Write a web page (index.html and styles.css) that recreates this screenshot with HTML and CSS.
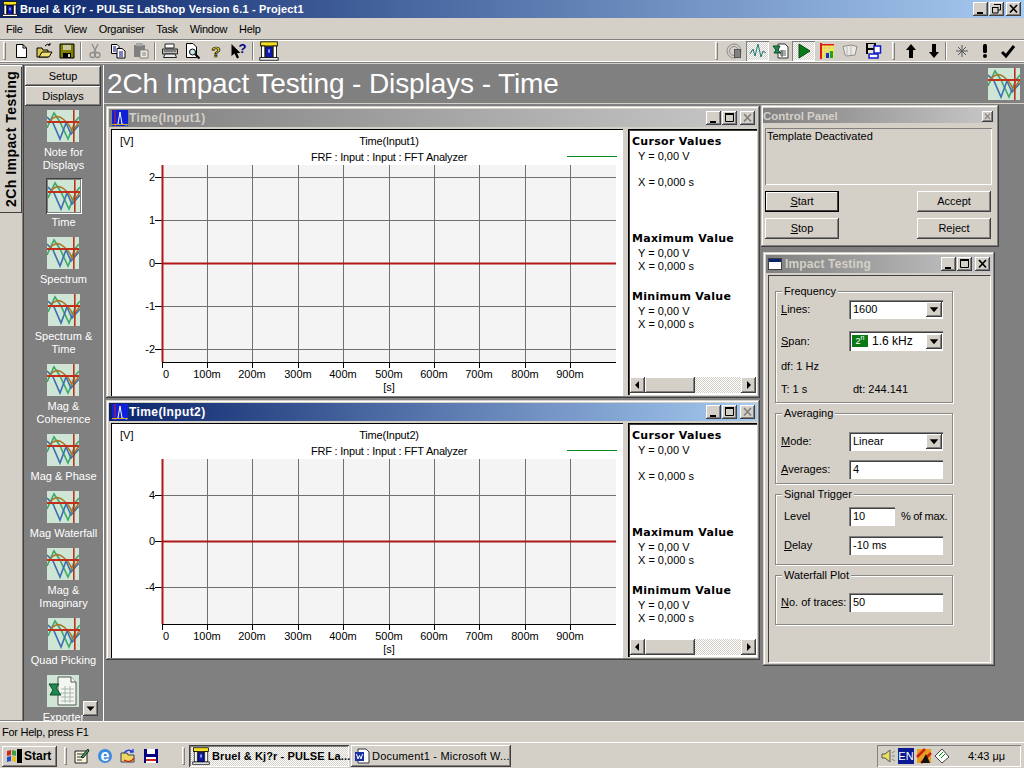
FILE: index.html
```html
<!DOCTYPE html>
<html lang="en">
<head>
<meta charset="utf-8">
<title>PULSE LabShop</title>
<link rel="stylesheet" href="styles.css">
</head>
<body>
<svg class="defs" width="0" height="0" aria-hidden="true">
  <defs>
    <symbol id="chart" viewBox="0 0 32 32">
      <rect width="32" height="32" fill="#cfe6d6"/>
      <path d="M0 18L7 3L13 12L21 29L28 12L32 7" fill="none" stroke="#3da86a" stroke-width="1.6"/>
      <path d="M0 7L6 13L13 29L19 13L24 24L32 15" fill="none" stroke="#3a6fb0" stroke-width="1.6"/>
      <path d="M2 12Q9 3 16 9T24 19T32 12" fill="none" stroke="#a8762a" stroke-width="1.6"/>
      <rect y="11" width="32" height="2" fill="#c2301c"/>
      <rect x="26" width="1.6" height="32" fill="#c2301c"/>
    </symbol>
    <symbol id="winicon" viewBox="0 0 16 16">
      <rect width="16" height="16" fill="#1020d8"/>
      <path d="M3 15L6 14L8 2L10 14L15 15" fill="none" stroke="#fff" stroke-width="1"/>
      <path d="M3 0V16" stroke="#d02020"/>
      <path d="M0 14.5H16" stroke="#c8b020"/>
    </symbol>
    <symbol id="excel" viewBox="0 0 32 32">
      <rect width="32" height="32" fill="#cfe6d6"/>
      <path d="M11 2H24L29 7V30H11Z" fill="#f4f6f2" stroke="#555"/>
      <path d="M24 2V7H29" fill="#fff" stroke="#555"/>
      <path d="M14 14H27M14 18H27M14 22H27M14 26H27M18 11V28M23 11V28" stroke="#a8b8a8"/>
      <path d="M2 9H12L9 13L14 20H3L6 15Z" fill="#1f8a50" stroke="#0c4a28"/>
    </symbol>
    <symbol id="temple" viewBox="0 0 24 24">
      <rect x="2" y="1" width="20" height="5" fill="#f4e020" stroke="#000"/>
      <rect x="3" y="6" width="4" height="14" fill="#fff" stroke="#000"/>
      <rect x="17" y="6" width="4" height="14" fill="#fff" stroke="#000"/>
      <rect x="8" y="7" width="8" height="13" fill="#1018b0" stroke="#000"/>
      <rect x="11" y="10" width="2" height="4" fill="#9cc4f0"/>
      <rect x="1" y="20" width="22" height="3" fill="#fff" stroke="#000"/>
    </symbol>
    <symbol id="floppy" viewBox="0 0 16 16">
      <path d="M1 1H15V15H1Z" fill="#808000" stroke="#000"/>
      <rect x="4" y="2" width="8" height="5" fill="#c8c8a0"/>
      <rect x="4" y="10" width="8" height="5" fill="#000"/>
      <rect x="9" y="11" width="2" height="3" fill="#d4d0c8"/>
    </symbol>
    <symbol id="word" viewBox="0 0 16 16">
      <path d="M4 1H12L15 4V15H4Z" fill="#fff" stroke="#334"/>
      <rect x="1" y="4" width="9" height="9" fill="#1830a0"/>
      <path d="M2.500 6L4 11L5.500 7.500L7 11L8.500 6" fill="none" stroke="#fff"/>
    </symbol>
    <symbol id="min" viewBox="0 0 15 14"><rect x="4" y="10" width="6" height="2" fill="#000"/></symbol>
    <symbol id="max" viewBox="0 0 15 14"><path d="M3.500 3.500H11.500V10.500H3.500Z M3 2.500H12" fill="none" stroke="#000"/><rect x="3" y="2" width="9" height="2" fill="#000"/></symbol>
    <symbol id="restore" viewBox="0 0 15 14"><path d="M5.500 2.500H11.500V8H9M3.500 5.500H9V11H3.500Z" fill="none" stroke="#000"/><path d="M5 2.500H12M3 5.500H9.500" stroke="#000"/></symbol>
    <symbol id="close" viewBox="0 0 15 14"><path d="M4 3L11 10.500M11 3L4 10.500" stroke="#000" stroke-width="1.700"/></symbol>
    <symbol id="closegrey" viewBox="0 0 15 14"><path d="M4 3L11 10.500M11 3L4 10.500" stroke="#808080" stroke-width="1.700"/></symbol>
    <symbol id="darrow" viewBox="0 0 15 14"><path d="M3.500 5H11.500L7.500 9.500Z" fill="#000"/></symbol>
    <symbol id="larrow" viewBox="0 0 15 15"><path d="M9 3.500V11.500L5 7.500Z" fill="#000"/></symbol>
    <symbol id="rarrow" viewBox="0 0 15 15"><path d="M6 3.500V11.500L10 7.500Z" fill="#000"/></symbol>
  </defs>
</svg>

<div class="app">
  <header class="titlebar">
    <svg class="title-icon" viewBox="0 0 24 24"><use href="#temple"/></svg>
    <span class="title-text">Bruel &amp; Kj?r - PULSE LabShop Version 6.1 - Project1</span>
    <span class="caption app-caption">
      <button class="cbtn"><svg><use href="#min"/></svg></button>
      <button class="cbtn"><svg><use href="#restore"/></svg></button>
      <button class="cbtn cbtn-last"><svg><use href="#close"/></svg></button>
    </span>
  </header>

  <nav class="menubar">
    <span>File</span><span>Edit</span><span>View</span><span>Organiser</span><span>Task</span><span>Window</span><span>Help</span>
  </nav>

  <div class="toolbar">
    <i class="grip grip-first"></i>
    <span class="tool"><svg viewBox="0 0 16 16"><path d="M3.500 1.500H10L13.500 5V14.500H3.500Z" fill="#fff" stroke="#000"/><path d="M10 1.500V5H13.500" fill="none" stroke="#000"/></svg></span>
    <span class="tool"><svg viewBox="0 0 16 16"><path d="M1 14V5H6L7 7H12V14Z" fill="#d8c850" stroke="#000"/><path d="M3 14L6 9H16L13 14Z" fill="#f0e070" stroke="#000"/><path d="M9 3Q11 0 14 2M14 2V0M14 2H12" fill="none" stroke="#000"/></svg></span>
    <span class="tool"><svg><use href="#floppy"/></svg></span>
    <i class="sep sep-a"></i>
    <span class="tool"><svg viewBox="0 0 16 16"><path d="M5 1L9 9M11 1L7 9" stroke="#8c8c8c" stroke-width="1.300"/><circle cx="5.500" cy="12" r="2.500" fill="none" stroke="#8c8c8c" stroke-width="1.300"/><circle cx="10.500" cy="12" r="2.500" fill="none" stroke="#8c8c8c" stroke-width="1.300"/></svg></span>
    <span class="tool"><svg viewBox="0 0 16 16"><path d="M1.500 1.500H7L9 3.500V10.500H1.500Z" fill="#fff" stroke="#000"/><path d="M7 5.500H12L15 8V15H7Z" fill="#fff" stroke="#000"/><path d="M3 4H6M3 6H6M3 8H6M9 9H13M9 11H13M9 13H13" stroke="#000080"/></svg></span>
    <span class="tool"><svg viewBox="0 0 16 16"><path d="M1 2H12V14H1Z" fill="#808080"/><rect x="3" y="0" width="7" height="3" fill="#a8a8a8"/><path d="M7 7H15V15H7Z" fill="#ece9e0" stroke="#808080"/><path d="M9 10H13M9 12H13" stroke="#808080"/></svg></span>
    <i class="sep"></i>
    <span class="tool"><svg viewBox="0 0 16 16"><path d="M3 1H12V5H3Z" fill="#fff" stroke="#222"/><path d="M0.500 6H15.500V11H0.500Z" fill="#b8b8b8" stroke="#222"/><path d="M3 11L1.500 14.500H14.500L13 11Z" fill="#e8e8e8" stroke="#222"/><path d="M2 8H14" stroke="#444"/></svg></span>
    <span class="tool"><svg viewBox="0 0 16 16"><path d="M1.500 0.500H8L11.500 4V14.500H1.500Z" fill="#fff" stroke="#000"/><circle cx="7.500" cy="9" r="3" fill="#c8e8e8" stroke="#000"/><path d="M10 11L14.500 15.500" stroke="#000" stroke-width="2"/></svg></span>
    <span class="tool"><svg viewBox="0 0 16 16"><text class="glyph glyph-help" x="8" y="14">?</text></svg></span>
    <span class="tool"><svg viewBox="0 0 16 16"><path d="M0.500 1L0.500 13L3.500 10.500L6 15.500L8 14.500L6 10H9.500Z" fill="#000"/><text class="glyph glyph-what" x="11.500" y="10">?</text></svg></span>
    <i class="sep sep-c"></i>
    <span class="tool tool-wide"><svg viewBox="0 0 24 24"><use href="#temple"/></svg></span>

    <i class="grip grip-right"></i>
    <span class="tool"><svg viewBox="0 0 16 16" fill="none" stroke="#8c8c8c"><circle cx="7" cy="8" r="7"/><circle cx="7" cy="8" r="4.500"/><rect x="7.500" y="6.500" width="6" height="8" fill="#808080" stroke="#555"/></svg></span>
    <span class="tool tool-on"><svg viewBox="0 0 16 16"><path d="M0 11L3 6L5 13L8 1L11 14L13 8L16 10" fill="none" stroke="#1f7878"/></svg></span>
    <span class="tool"><svg viewBox="0 0 16 16"><path d="M5 1H12L15 4V15H5Z" fill="#fff" stroke="#333"/><path d="M7 8H13M7 10H13M7 12H13M9 7V14" stroke="#555"/><path d="M0 3H7L5 7L8 10H1L3 7Z" fill="#1f8a50" stroke="#0c4a28"/></svg></span>
    <span class="tool tool-on"><svg viewBox="0 0 16 16"><path d="M3 1L14 8L3 15Z" fill="#0a7a18" stroke="#084a10"/></svg></span>
    <span class="tool"><svg viewBox="0 0 16 16"><rect x="2" y="1" width="13" height="14" fill="#f4f040"/><path d="M2 5H15M2 9H15M2 13H15M6 1V15M10 1V15" stroke="#d8c8a0"/><rect x="1" y="0" width="2" height="16" fill="#e01818"/><rect x="3" y="1" width="12" height="1.500" fill="#e01818"/><rect x="7" y="10" width="3" height="5" fill="#1830c0"/><rect x="11" y="8" width="3" height="7" fill="#20a030"/></svg></span>
    <span class="tool"><svg viewBox="0 0 16 16"><path d="M1 3.500L9 2L15 3.500L13 12L5 13L3 12Z" fill="#ece9e0" stroke="#8c8c8c"/><path d="M5 4V13M9 3V12" stroke="#b8b8b8"/></svg></span>
    <span class="tool"><svg viewBox="0 0 16 16"><path d="M1 0H11V11H1Z" fill="#000"/><rect x="3" y="1" width="6" height="4" fill="#d4d0c8"/><rect x="3" y="7" width="6" height="4" fill="#e8e4c8"/><rect x="9" y="3" width="6.500" height="7" fill="#fff" stroke="#1018d0" stroke-width="1.500"/><rect x="4" y="11" width="9" height="4" fill="#fff" stroke="#1018d0" stroke-width="1.500"/></svg></span>
    <i class="grip grip-mid"></i>
    <span class="tool"><svg viewBox="0 0 16 16"><path d="M8 1L13 7H10V15H6V7H3Z" fill="#000"/></svg></span>
    <span class="tool"><svg viewBox="0 0 16 16"><path d="M8 15L3 9H6V1H10V9H13Z" fill="#000"/></svg></span>
    <i class="sep sep-thin"></i>
    <span class="tool"><svg viewBox="0 0 16 16" stroke="#555"><path d="M8 2V14M2 8H14M4 4L12 12M12 4L4 12"/></svg></span>
    <span class="tool"><svg viewBox="0 0 16 16"><rect x="6" y="1" width="4" height="9" rx="1.500"/><circle cx="8" cy="13" r="2"/></svg></span>
    <span class="tool"><svg viewBox="0 0 16 16"><path d="M2 9L6 13L14 3" fill="none" stroke="#000" stroke-width="3"/></svg></span>
  </div>

  <main class="main">
    <div class="tabstrip"><span class="vtab">2Ch Impact Testing</span></div>

    <aside class="sidebar">
      <button class="side-btn">Setup</button>
      <button class="side-btn">Displays</button>
      <div class="shelf">
        <div class="item"><svg class="tile"><use href="#chart"/></svg><span>Note for<br>Displays</span></div>
        <div class="item item-on"><svg class="tile"><use href="#chart"/></svg><span>Time</span></div>
        <div class="item"><svg class="tile"><use href="#chart"/></svg><span>Spectrum</span></div>
        <div class="item"><svg class="tile"><use href="#chart"/></svg><span>Spectrum &amp;<br>Time</span></div>
        <div class="item"><svg class="tile"><use href="#chart"/></svg><span>Mag &amp;<br>Coherence</span></div>
        <div class="item"><svg class="tile"><use href="#chart"/></svg><span>Mag &amp; Phase</span></div>
        <div class="item"><svg class="tile"><use href="#chart"/></svg><span>Mag Waterfall</span></div>
        <div class="item"><svg class="tile"><use href="#chart"/></svg><span>Mag &amp;<br>Imaginary</span></div>
        <div class="item"><svg class="tile"><use href="#chart"/></svg><span>Quad Picking</span></div>
        <div class="item"><svg class="tile"><use href="#excel"/></svg><span>Exporter</span></div>
        <button class="cbtn shelf-down"><svg><use href="#darrow"/></svg></button>
      </div>
    </aside>

    <section class="workspace">
      <div class="banner">
        <h1>2Ch Impact Testing - Displays - Time</h1>
        <svg class="tile banner-tile"><use href="#chart"/></svg>
      </div>

      <div class="desktop">
        <article class="win win-one">
          <div class="wtitle wtitle-off wtitle-time">
            <svg class="wicon"><use href="#winicon"/></svg><span>Time(Input1)</span>
            <span class="caption">
              <button class="cbtn"><svg><use href="#min"/></svg></button>
              <button class="cbtn"><svg><use href="#max"/></svg></button>
              <button class="cbtn cbtn-gap"><svg><use href="#closegrey"/></svg></button>
            </span>
          </div>
          <div class="wbody">
            <svg class="plot plot-one" viewBox="111 129 512 267" role="img">
              <rect x="162" y="165" width="454" height="197" fill="#f4f4f4"/>
              <path class="grid" d="M207.500 165V362M252.500 165V362M298.500 165V362M343.500 165V362M389.500 165V362M434.500 165V362M479.500 165V362M525.500 165V362M570.500 165V362"/>
              <path class="grid" d="M162 177.500H616M162 220.500H616M162 306.500H616M162 349.500H616"/>
              <path class="axis" d="M162 362.500H616M162.500 362V368M207.500 362V368M252.500 362V368M298.500 362V368M343.500 362V368M389.500 362V368M434.500 362V368M479.500 362V368M525.500 362V368M570.500 362V368"/>
              <path class="axis" d="M155 177.500H162M155 220.500H162M155 263.500H162M155 306.500H162M155 349.500H162"/>
              <path class="trace" d="M162.500 165V362M162 263.500H616"/>
              <path class="legend" d="M567 156.500H617"/>
              <text x="120" y="145">[V]</text>
              <text class="mid tight" x="389" y="145">Time(Input1)</text>
              <text class="mid tight" x="389" y="161">FRF : Input : Input : FFT Analyzer</text>
              <text class="end" x="155" y="181">2</text><text class="end" x="155" y="224">1</text><text class="end" x="155" y="267">0</text><text class="end" x="155" y="310">-1</text><text class="end" x="155" y="353">-2</text>
              <text class="mid" x="166" y="378">0</text><text class="mid" x="207" y="378">100m</text><text class="mid" x="252" y="378">200m</text><text class="mid" x="298" y="378">300m</text><text class="mid" x="343" y="378">400m</text><text class="mid" x="389" y="378">500m</text><text class="mid" x="434" y="378">600m</text><text class="mid" x="479" y="378">700m</text><text class="mid" x="525" y="378">800m</text><text class="mid" x="570" y="378">900m</text>
              <text class="mid" x="389" y="391">[s]</text>
            </svg>
            <div class="readout">
              <h3>Cursor Values</h3>
              <p>Y = 0,00 V</p>
              <p class="lead-x">X = 0,000 s</p>
              <h3 class="h-max">Maximum Value</h3>
              <p>Y = 0,00 V</p>
              <p class="p-x">X = 0,000 s</p>
              <h3 class="h-min">Minimum Value</h3>
              <p>Y = 0,00 V</p>
              <p class="p-x">X = 0,000 s</p>
              <div class="hscroll">
                <button class="cbtn"><svg><use href="#larrow"/></svg></button>
                <button class="thumb"></button>
                <span class="track"></span>
                <button class="cbtn"><svg><use href="#rarrow"/></svg></button>
              </div>
            </div>
          </div>
        </article>

        <article class="win win-two">
          <div class="wtitle wtitle-time">
            <svg class="wicon"><use href="#winicon"/></svg><span>Time(Input2)</span>
            <span class="caption">
              <button class="cbtn"><svg><use href="#min"/></svg></button>
              <button class="cbtn"><svg><use href="#max"/></svg></button>
              <button class="cbtn cbtn-gap"><svg><use href="#closegrey"/></svg></button>
            </span>
          </div>
          <div class="wbody">
            <svg class="plot plot-two" viewBox="111 423 512 235" role="img">
              <rect x="162" y="459" width="454" height="165" fill="#f4f4f4"/>
              <path class="grid" d="M207.500 459V624M252.500 459V624M298.500 459V624M343.500 459V624M389.500 459V624M434.500 459V624M479.500 459V624M525.500 459V624M570.500 459V624"/>
              <path class="grid" d="M162 495.500H616M162 587.500H616"/>
              <path class="axis" d="M162 624.500H616M162.500 624V630M207.500 624V630M252.500 624V630M298.500 624V630M343.500 624V630M389.500 624V630M434.500 624V630M479.500 624V630M525.500 624V630M570.500 624V630"/>
              <path class="axis" d="M155 495.500H162M155 541.500H162M155 587.500H162"/>
              <path class="trace" d="M162.500 459V624M162 541.500H616"/>
              <path class="legend" d="M567 450.500H617"/>
              <text x="120" y="439">[V]</text>
              <text class="mid tight" x="389" y="439">Time(Input2)</text>
              <text class="mid tight" x="389" y="455">FRF : Input : Input : FFT Analyzer</text>
              <text class="end" x="155" y="499">4</text><text class="end" x="155" y="545">0</text><text class="end" x="155" y="591">-4</text>
              <text class="mid" x="166" y="640">0</text><text class="mid" x="207" y="640">100m</text><text class="mid" x="252" y="640">200m</text><text class="mid" x="298" y="640">300m</text><text class="mid" x="343" y="640">400m</text><text class="mid" x="389" y="640">500m</text><text class="mid" x="434" y="640">600m</text><text class="mid" x="479" y="640">700m</text><text class="mid" x="525" y="640">800m</text><text class="mid" x="570" y="640">900m</text>
              <text class="mid" x="389" y="653">[s]</text>
            </svg>
            <div class="readout">
              <h3>Cursor Values</h3>
              <p>Y = 0,00 V</p>
              <p class="lead-x">X = 0,000 s</p>
              <h3 class="h-max">Maximum Value</h3>
              <p>Y = 0,00 V</p>
              <p class="p-x">X = 0,000 s</p>
              <h3 class="h-min">Minimum Value</h3>
              <p>Y = 0,00 V</p>
              <p class="p-x">X = 0,000 s</p>
              <div class="hscroll">
                <button class="cbtn"><svg><use href="#larrow"/></svg></button>
                <button class="thumb"></button>
                <span class="track"></span>
                <button class="cbtn"><svg><use href="#rarrow"/></svg></button>
              </div>
            </div>
          </div>
        </article>

        <article class="win win-control">
          <div class="wtitle wtitle-off wtitle-small">
            <span>Control Panel</span>
            <span class="caption"><button class="cbtn cbtn-small"><svg><use href="#closegrey"/></svg></button></span>
          </div>
          <div class="cp-msg">Template Deactivated</div>
          <div class="cp-row">
            <button class="btn btn-default"><u>S</u>tart</button>
            <button class="btn">Accept</button>
          </div>
          <div class="cp-row">
            <button class="btn"><u>S</u>top</button>
            <button class="btn">Reject</button>
          </div>
        </article>

        <article class="win win-impact">
          <div class="wtitle wtitle-off">
            <svg class="wicon wicon-form" viewBox="0 0 14 12"><rect x="0.500" y="0.500" width="13" height="11" fill="#fff" stroke="#404040"/><rect x="1" y="1" width="12" height="3" fill="#0a246a"/></svg><span>Impact Testing</span>
            <span class="caption">
              <button class="cbtn"><svg><use href="#min"/></svg></button>
              <button class="cbtn"><svg><use href="#max"/></svg></button>
              <button class="cbtn cbtn-gap"><svg><use href="#close"/></svg></button>
            </span>
          </div>
          <div class="client">
            <div class="group g-freq">
              <span class="glabel">Frequency</span>
              <div class="row"><label><u>L</u>ines:</label><span class="combo"><span class="combo-val">1600</span><button class="cbtn"><svg><use href="#darrow"/></svg></button></span></div>
              <div class="row row-span"><label><u>S</u>pan:</label><span class="combo combo-tall"><span class="combo-val"><b class="badge">2<sup>n</sup></b>1.6 kHz</span><button class="cbtn"><svg><use href="#darrow"/></svg></button></span></div>
              <div class="line line-df">df: 1 Hz</div>
              <div class="line line-t"><span class="line-lab">T: 1 s</span><span>dt: 244.141</span></div>
            </div>
            <div class="group g-avg">
              <span class="glabel">Averaging</span>
              <div class="row"><label><u>M</u>ode:</label><span class="combo"><span class="combo-val">Linear</span><button class="cbtn"><svg><use href="#darrow"/></svg></button></span></div>
              <div class="row row-next"><label><u>A</u>verages:</label><span class="field">4</span></div>
            </div>
            <div class="group g-trig">
              <span class="glabel">Signal Trigger</span>
              <div class="row"><label class="ind">Level</label><span class="field field-short">10</span><span class="unit">% of max.</span></div>
              <div class="row row-next"><label class="ind"><u>D</u>elay</label><span class="field">-10 ms</span></div>
            </div>
            <div class="group g-fall">
              <span class="glabel">Waterfall Plot</span>
              <div class="row"><label><u>N</u>o. of traces:</label><span class="field">50</span></div>
            </div>
          </div>
        </article>
      </div>
    </section>
  </main>

  <div class="statusbar">For Help, press F1</div>

  <footer class="taskbar">
    <button class="start">
      <svg viewBox="0 0 18 16"><path d="M1 3L5 2V7L1 8Z" fill="#d02818"/><path d="M6 2L10 3V8L6 7Z" fill="#38a040"/><path d="M1 9L5 8V13L1 14Z" fill="#2050c8"/><path d="M6 8L10 9V14L6 13Z" fill="#e8c020"/><path d="M11 1H16V15H11Z" fill="#000"/></svg>
      <span>Start</span>
    </button>
    <i class="grip grip-task"></i>
    <span class="quick"><svg viewBox="0 0 16 16"><path d="M1 3H13V15H1Z" fill="#f8f4d0" stroke="#223"/><path d="M3 6H11M3 9H9M3 12H8" stroke="#335"/><path d="M7 9L14 1L15 3L9 10Z" fill="#40a040" stroke="#123"/></svg></span>
    <span class="quick"><svg viewBox="0 0 16 16"><circle cx="8" cy="8" r="7" fill="#3a8ae0"/><text class="glyph glyph-ie" x="8" y="13">e</text></svg></span>
    <span class="quick"><svg viewBox="0 0 16 16"><path d="M1 5H7L8 7H14V14H1Z" fill="#f0d860" stroke="#345"/><path d="M4 5Q8 0 13 4M13 1V4H10" fill="none" stroke="#1838d8" stroke-width="1.300"/><path d="M14 10Q10 16 4 12" fill="none" stroke="#d02020" stroke-width="1.300"/></svg></span>
    <span class="quick"><svg viewBox="0 0 16 16"><path d="M1 1H15V15H1Z" fill="#000080"/><rect x="4" y="1" width="8" height="5" fill="#fff"/><rect x="3" y="9" width="10" height="6" fill="#fff"/><rect x="3" y="11" width="10" height="2" fill="#d02020"/></svg></span>
    <i class="grip grip-task2"></i>
    <button class="task task-on"><svg viewBox="0 0 24 24"><use href="#temple"/></svg><span>Bruel &amp; Kj?r - PULSE La...</span></button>
    <button class="task task-doc"><svg viewBox="0 0 16 16"><use href="#word"/></svg><span>Document1 - Microsoft W...</span></button>
    <div class="tray">
      <svg viewBox="0 0 16 16"><path d="M2 6H5L10 2V14L5 10H2Z" fill="#e8e060" stroke="#555"/><path d="M12 5L15 3M12 8H15M12 11L15 13" stroke="#888"/></svg>
      <span class="lang">EN</span>
      <svg viewBox="0 0 16 16"><rect x="1" y="1" width="14" height="14" fill="#e8a020"/><path d="M1 9L9 1M5 15L15 5" stroke="#d02010" stroke-width="2.500"/><path d="M5 15L10 6L14 15Z" fill="#111"/></svg>
      <svg viewBox="0 0 16 16"><path d="M8 1L15 9L8 15L1 8Z" fill="#fff" stroke="#444"/><path d="M5 8L9 4M7 10L11 6" stroke="#080"/></svg>
      <span class="clock">4:43 μμ</span>
    </div>
  </footer>
</div>
</body>
</html>
```

FILE: styles.css
```css
* { box-sizing: border-box; }
html, body { margin: 0; height: 100%; overflow: hidden; }
body { font: 11px/13px "Liberation Sans", Arial, sans-serif; color: #000; background: #d4d0c8; }
button { font: inherit; color: inherit; border: 0; padding: 0; margin: 0; background: #d4d0c8; }
i { display: block; }
.defs { position: absolute; }

.app { width: 1024px; height: 768px; display: flex; flex-direction: column; }

/* raised control */
.cbtn, .btn, .side-btn, .thumb, .start, .task {
  background: #d4d0c8;
  box-shadow: inset -1px -1px 0 #404040, inset 1px 1px 0 #fff, inset -2px -2px 0 #808080;
}

/* title bar */
.titlebar { height: 18px; flex: none; display: flex; align-items: center; padding: 0 3px 0 2px; background: linear-gradient(90deg, #0a246a, #a6caf0); color: #fff; }
.title-icon { width: 16px; height: 16px; flex: none; margin-right: 2px; }
.title-text { font-weight: bold; font-size: 11px; letter-spacing: .17px; }
.caption { margin-left: auto; display: flex; gap: 1px; }
.cbtn { width: 15px; height: 14px; display: block; flex: none; }
.cbtn svg { display: block; width: 100%; height: 100%; }
.app-caption .cbtn-last { margin-left: 1px; }

/* menu */
.menubar { height: 22px; flex: none; display: flex; align-items: center; padding-left: 6px; gap: 12px; letter-spacing: -.3px; }

/* toolbar */
.toolbar { height: 22px; flex: none; display: flex; align-items: center; padding: 0 5px 0 3px; border-top: 1px solid #fff; box-shadow: 0 -1px 0 #808080, 0 1px 0 #808080; margin-bottom: 2px; border-bottom: 1px solid #fff; }
.tool { width: 23px; height: 20px; flex: none; display: flex; align-items: center; justify-content: center; }
.tool svg { width: 16px; height: 16px; display: block; overflow: visible; }
.tool-wide svg { width: 20px; height: 20px; }
.tool-on { background: repeating-conic-gradient(#fff 0 25%, #d4d0c8 0 50%) 0 0 / 2px 2px; box-shadow: inset 1px 1px 0 #808080, inset -1px -1px 0 #fff; }
.grip { width: 3px; height: 18px; margin-right: 4px; flex: none; border-left: 1px solid #fff; border-top: 1px solid #fff; border-right: 1px solid #808080; border-bottom: 1px solid #808080; }
.grip-first { margin-right: 3px; }
.sep { width: 2px; height: 18px; margin: 0 2px; flex: none; border-left: 1px solid #808080; border-right: 1px solid #fff; }
.sep-a { margin: 0 1px 0 2px; }
.sep-c { margin: 0 3px 0 2px; }
.grip-right { margin-left: auto; margin-right: 5px; }
.grip-mid { margin-left: 8px; margin-right: 4px; }
.sep-thin { margin: 0 3px 0 0; }

/* main */
.main { flex: 1; min-height: 0; display: flex; border-top: 1px solid #808080; }
.tabstrip { width: 23px; flex: none; border-right: 1px solid #808080; box-shadow: inset 0 1px 0 #fff; }
.vtab { display: block; width: 22px; height: 146px; margin-top: 2px; writing-mode: vertical-rl; transform: rotate(180deg); font-weight: bold; font-size: 14px; line-height: 20px; letter-spacing: .45px; text-align: left; padding: 5px 1px 0 0; background: #d4d0c8; border-left: 1px solid #404040; border-top: 1px solid #404040; white-space: nowrap; }

.sidebar { width: 81px; flex: none; position: relative; display: flex; flex-direction: column; padding: 1px 2px 0; background: #808080; overflow: hidden; border-right: 1px solid #fff; box-shadow: inset 1px 0 0 #404040; color: #fff; }
.side-btn { height: 20px; flex: none; color: #000; text-align: center; }
.shelf { flex: 1; position: relative; display: flex; flex-direction: column; align-items: center; padding: 4px 0 0 1px; }
.item { display: flex; flex-direction: column; align-items: center; gap: 4px; margin-bottom: 8px; text-align: center; white-space: nowrap; position: relative; }
.tile { width: 32px; height: 32px; display: block; flex: none; }
.item-on::before { content: ""; position: absolute; left: -2px; top: -2px; width: 36px; height: 36px; box-shadow: inset 1px 1px 0 #404040, inset -1px -1px 0 #fff; }
.item-on .tile { position: relative; z-index: 1; }
.shelf-down { position: absolute; left: 58px; top: 595px; width: 15px; height: 15px; }

/* workspace */
.workspace { flex: 1; min-width: 0; display: flex; flex-direction: column; background: #808080; }
.banner { height: 39px; flex: none; display: flex; align-items: center; justify-content: space-between; padding: 0 4px 0 3px; border-bottom: 1px solid #d4d0c8; }
.banner h1 { margin: 0; color: #fff; font-weight: normal; font-size: 28px; letter-spacing: -.1px; line-height: 36px; }
.desktop { flex: 1; position: relative; }

.win { position: absolute; display: flex; flex-direction: column; background: #d4d0c8; padding: 3px; box-shadow: inset -1px -1px 0 #404040, inset 1px 1px 0 #d4d0c8, inset -2px -2px 0 #808080, inset 2px 2px 0 #fff; }
.win-one { left: 2px; top: 2px; width: 654px; height: 292px; }
.win-two { left: 2px; top: 296px; width: 654px; height: 260px; }
.win-control { left: 657px; top: 1px; width: 238px; height: 142px; padding-left: 4px; }
.win-impact { left: 659px; top: 148px; width: 232px; height: 414px; }

.wtitle { height: 18px; flex: none; display: flex; align-items: center; padding-right: 2px; background: linear-gradient(90deg, #0a246a, #a6caf0); color: #fff; font-weight: bold; font-size: 12px; letter-spacing: .15px; margin-bottom: 2px; }
.wtitle-time { letter-spacing: .4px; }
.wtitle-off { background: linear-gradient(90deg, #808080, #c8c8c8); color: #d4d0c8; }
.wtitle-small { height: 15px; margin: 0 0 5px -2px; padding: 1px 3px 0 0; font-size: 11.500px; letter-spacing: 0; }
.wicon { width: 16px; height: 16px; flex: none; margin-right: 1px; margin-left: 3px; }
.wicon-form { width: 14px; height: 12px; margin-right: 3px; margin-left: 2px; }
.cbtn-gap { margin-left: 2px; }
.cbtn-small { width: 11px; height: 11px; }

.wbody { flex: 1; min-height: 0; display: flex; gap: 5px; margin-left: 2px; }
.plot { flex: none; width: 512px; display: block; background: #fff; box-shadow: inset 1px 1px 0 #000; }
.plot-one { height: 267px; }
.plot-two { height: 235px; }
.plot text { font: 11px "Liberation Sans", Arial, sans-serif; fill: #000; }
.plot .mid { text-anchor: middle; }
.plot .end { text-anchor: end; }
.plot .tight { letter-spacing: -.2px; }
.grid { stroke: #707070; stroke-width: 1; fill: none; }
.axis { stroke: #000; stroke-width: 1; fill: none; }
.trace { stroke: #b01818; stroke-width: 2; fill: none; }
.legend { stroke: #0a8a20; stroke-width: 1; }

.readout { flex: 1; min-width: 0; display: flex; flex-direction: column; background: #fff; padding: 6px 1px 2px 4px; box-shadow: inset 1px 1px 0 #000, inset 2px 2px 0 #404040; }
.readout h3 { margin: 0; font: bold 11px/13px "DejaVu Sans", Verdana, sans-serif; letter-spacing: .3px; white-space: nowrap; }
.readout p { margin: 2px 0 0 6px; line-height: 13px; white-space: nowrap; }
.readout .p-x { margin-top: 0; }
.readout .lead-x { margin-top: 13px; }
.readout .h-max { margin-top: 43px; }
.readout .h-min { margin-top: 17px; }
.hscroll { margin-top: auto; display: flex; height: 16px; flex: none; margin-left: -2px; }
.hscroll .cbtn { width: 15px; height: 16px; }
.thumb { width: 50px; height: 16px; flex: none; }
.track { flex: 1; background: repeating-conic-gradient(#fff 0 25%, #d4d0c8 0 50%) 0 0 / 2px 2px; }

/* control panel */
.cp-msg { width: 227px; height: 57px; flex: none; padding: 2px; box-shadow: inset 1px 1px 0 #808080, inset -1px -1px 0 #fff; }
.cp-row { display: flex; justify-content: space-between; width: 226px; margin-top: 6px; }
.btn { width: 74px; height: 21px; text-align: center; }
.btn-default { box-shadow: inset 0 0 0 1px #000, inset -2px -2px 0 #404040, inset 2px 2px 0 #fff; }

/* impact form */
.client { flex: 1; min-height: 0; display: flex; flex-direction: column; gap: 10px; padding: 15px 0 0 6px; margin-left: 2px; margin-right: 1px; border-left: 1px solid #404040; border-top: 1px solid #404040; border-right: 1px solid #fff; border-bottom: 1px solid #fff; }
.group { position: relative; width: 178px; flex: none; padding-left: 5px; border: 1px solid #8a8a84; box-shadow: 1px 1px 0 #fff, inset 1px 1px 0 #fff; }
.glabel { position: absolute; top: -7px; left: 6px; padding: 0 2px; background: #d4d0c8; }
.g-freq { height: 112px; padding-top: 8px; }
.g-avg { height: 71px; padding-top: 18px; }
.g-trig { height: 71px; padding-top: 12px; }
.g-trig .row-next { margin-top: 10px; }
.g-fall { height: 50px; padding-top: 17px; }
.row { display: flex; align-items: center; height: 19px; }
.row label { width: 68px; flex: none; white-space: nowrap; }
.row label.ind { padding-left: 3px; }
.row-span { margin-top: 12px; height: 20px; }
.row-next { margin-top: 9px; }
.combo, .field { width: 94px; height: 19px; flex: none; display: flex; align-items: center; justify-content: space-between; background: #fff; padding: 1px 1px 1px 4px; box-shadow: inset 1px 1px 0 #808080, inset 2px 2px 0 #404040, inset -1px -1px 0 #fff; }
.combo-tall { height: 20px; padding-left: 3px; }
.combo-tall .combo-val { font-size: 12px; }
.combo .cbtn { width: 16px; height: 15px; }
.combo-val { display: flex; align-items: center; }
.badge { display: inline-block; width: 16px; height: 12px; margin-right: 4px; background: #0a7a18; color: #fff; font-weight: normal; font-size: 9px; line-height: 12px; text-align: center; }
.badge sup { font-size: 7px; line-height: 0; }
.field-short { width: 46px; }
.unit { margin-left: 6px; white-space: nowrap; letter-spacing: -.3px; }
.line { line-height: 13px; }
.line-df { margin-top: 9px; }
.line-t { margin-top: 10px; display: flex; }
.line-lab { width: 72px; }

/* status + taskbar */
.statusbar { height: 21px; flex: none; padding: 4px 2px 0; border-top: 1px solid #fff; box-shadow: 0 -1px 0 #808080; letter-spacing: -.25px; }
.taskbar { height: 26px; flex: none; display: flex; align-items: center; padding: 1px 3px 0 2px; border-top: 1px solid #fff; }
.start { width: 55px; height: 21px; display: flex; align-items: center; gap: 0; padding-left: 4px; font-weight: bold; font-size: 12px; }
.start svg { width: 18px; height: 16px; flex: none; }
.grip-task { margin-left: 7px; margin-right: 3px; }
.grip-task2 { margin-left: 20px; margin-right: 4px; }
.quick { width: 23px; flex: none; display: flex; justify-content: center; }
.quick svg { width: 16px; height: 16px; display: block; overflow: visible; }
.task { width: 160px; height: 22px; flex: none; display: flex; align-items: center; gap: 2px; padding-left: 3px; margin-right: 2px; white-space: nowrap; }
.task svg { width: 16px; height: 16px; flex: none; }
.task-on svg { width: 18px; height: 18px; }
.task-doc { letter-spacing: .2px; }
.task-on { font-weight: bold; letter-spacing: .1px; background: repeating-conic-gradient(#fff 0 25%, #d4d0c8 0 50%) 0 0 / 2px 2px; box-shadow: inset 1px 1px 0 #404040, inset -1px -1px 0 #fff, inset 2px 2px 0 #808080; }
.tray { margin-left: auto; width: 144px; height: 22px; display: flex; align-items: center; gap: 2px; padding-left: 3px; box-shadow: inset 1px 1px 0 #808080, inset -1px -1px 0 #fff; }
.tray svg { width: 16px; height: 16px; flex: none; }
.lang { width: 16px; height: 16px; background: #0a1a90; color: #fff; text-align: center; font-size: 11px; line-height: 16px; }
.clock { margin-left: 16px; white-space: nowrap; }

.glyph { font-family: "Liberation Sans", Arial, sans-serif; font-weight: bold; text-anchor: middle; }
.glyph-help { font-size: 15px; fill: #f8e020; stroke: #000; stroke-width: .7px; }
.glyph-what { font-size: 13px; fill: #000080; }
.glyph-ie { font-size: 16px; fill: #fff; }
```
